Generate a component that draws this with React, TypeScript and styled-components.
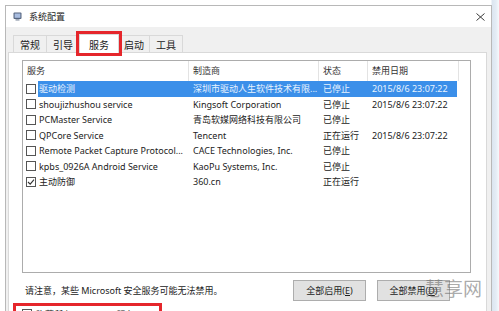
import React from 'react';
import styled, { createGlobalStyle } from 'styled-components';

const GlobalStyle = createGlobalStyle`
  body {
    margin: 0;
    background: #fff;
    font-family: "Noto Sans", "Noto Sans CJK SC", sans-serif;
  }
  * { box-sizing: border-box; }
`;

interface IService {
  name: string;
  maker: string;
  status: string;
  date: string;
  checked?: boolean;
  selected?: boolean;
}

const services: IService[] = [
  { name: '驱动检测', maker: '深圳市驱动人生软件技术有限...', status: '已停止', date: '2015/8/6 23:07:22', selected: true },
  { name: 'shoujizhushou service', maker: 'Kingsoft Corporation', status: '已停止', date: '2015/8/6 23:07:22' },
  { name: 'PCMaster Service', maker: '青岛软媒网络科技有限公司', status: '已停止', date: '' },
  { name: 'QPCore Service', maker: 'Tencent', status: '正在运行', date: '2015/8/6 23:07:22' },
  { name: 'Remote Packet Capture Protocol...', maker: 'CACE Technologies, Inc.', status: '已停止', date: '' },
  { name: 'kpbs_0926A Android Service', maker: 'KaoPu Systems, Inc.', status: '已停止', date: '' },
  { name: '主动防御', maker: '360.cn', status: '正在运行', date: '', checked: true },
];

const tabs = ['常规', '引导', '服务', '启动', '工具'];
const tabWidths = [34, 34, 40, 32, 34];

const App: React.FC = () => {
  return (
    <Page>
      <GlobalStyle />
      <Window>
        <TitleBar>
          <svg width="9" height="9" viewBox="0 0 9 9">
            <rect x="0.5" y="0.5" width="8" height="6.5" rx="1" fill="#56657f" />
            <rect x="1.6" y="1.5" width="5.8" height="4.3" fill="#a9bde0" />
            <rect x="2.5" y="7.3" width="4" height="1.2" fill="#7a869a" />
          </svg>
          <Title>系统配置</Title>
          <CloseButton>
            <svg width="9" height="8" viewBox="0 0 9 8">
              <path d="M0.5 0.5 L8.5 7.5 M8.5 0.5 L0.5 7.5" stroke="#3a3a3a" strokeWidth="1" />
            </svg>
          </CloseButton>
        </TitleBar>

        <TabStrip>
          {tabs.map((t, i) => (
            <Tab key={t} $active={t === '服务'} style={{ width: tabWidths[i] }}>
              {t}
            </Tab>
          ))}
        </TabStrip>

        <Panel>
          <ListBox>
            <HeaderRow>
              <HeaderCell>服务</HeaderCell>
              <HeaderCell>制造商</HeaderCell>
              <HeaderCell>状态</HeaderCell>
              <HeaderCell>禁用日期</HeaderCell>
            </HeaderRow>
            {services.map((s) => (
              <Row key={s.name}>
                <CheckCell>
                  <CheckBox>
                    {s.checked && (
                      <svg width="8" height="8" viewBox="0 0 8 8">
                        <path d="M1 4 L3.2 6.2 L7 1.6" stroke="#333" strokeWidth="1.1" fill="none" />
                      </svg>
                    )}
                  </CheckBox>
                </CheckCell>
                <RowBody $selected={s.selected}>
                  <Cell $first>{s.name}</Cell>
                  <Cell>{s.maker}</Cell>
                  <Cell>{s.status}</Cell>
                  <Cell>{s.date}</Cell>
                </RowBody>
              </Row>
            ))}
          </ListBox>

          <NoteRow>
            <Note>请注意，某些 Microsoft 安全服务可能无法禁用。</Note>
            <Buttons>
              <Button>全部启用(<u>E</u>)</Button>
              <Button>全部禁用(<u>D</u>)</Button>
            </Buttons>
          </NoteRow>

          <HideRow>
            <CheckBox />
            <span>隐藏所有 Microsoft 服务(<u>H</u>)</span>
          </HideRow>
        </Panel>
      </Window>
      <Watermark>慧享网</Watermark>
    </Page>
  );
};

const Page = styled.div`
  position: relative;
  width: 499px;
  height: 311px;
  overflow: hidden;
  padding: 5px 0 0 5px;
  background: linear-gradient(
    to right,
    #ffffff 491px,
    #dbe5f0 492px,
    #e4ecf5 496px,
    #f6f9fc 499px
  );
`;

const Window = styled.div`
  width: 487px;
  height: 320px;
  border: 1px solid #b8b8b8;
  background: #f0f0f0;
  display: flex;
  flex-direction: column;
`;

const TitleBar = styled.div`
  height: 21px;
  background: #fff;
  display: flex;
  align-items: center;
  padding: 0 6px 0 7px;
  flex-shrink: 0;
`;

const Title = styled.span`
  margin-left: 7px;
  font-size: 9px;
  color: #222;
  font-family: "Noto Sans CJK SC", sans-serif;
`;

const CloseButton = styled.div`
  margin-left: auto;
  display: flex;
  align-items: center;
`;

const TabStrip = styled.div`
  height: 26px;
  display: flex;
  align-items: flex-end;
  padding: 0 0 0 7px;
  margin-bottom: -1px;
  flex-shrink: 0;
`;

const Tab = styled.div<{ $active?: boolean }>`
  position: relative;
  height: ${(p) => (p.$active ? '19px' : '18px')};
  margin-right: -1px;
  border: 1px solid #d9d9d9;
  border-bottom: ${(p) => (p.$active ? 'none' : '1px solid #d9d9d9')};
  background: ${(p) => (p.$active ? '#fff' : '#f0f0f0')};
  z-index: ${(p) => (p.$active ? 2 : 1)};
  outline: ${(p) => (p.$active ? '3px solid #e5262b' : 'none')};
  font-family: "Noto Sans CJK SC", sans-serif;
  font-size: 10px;
  color: #222;
  display: flex;
  align-items: center;
  justify-content: center;
`;

const Panel = styled.div`
  margin-left: 2px;
  width: 479px;
  flex: 1;
  background: #fff;
  border: 1px solid #d9d9d9;
  padding: 7px 0 0 13px;
`;

const ListBox = styled.div`
  width: 449px;
  height: 213px;
  border: 1px solid #acacac;
`;

const HeaderRow = styled.div`
  display: grid;
  grid-template-columns: 166px 130px 49px 91px;
  height: 20px;
`;

const HeaderCell = styled.div`
  border-right: 1px solid #e3e3e3;
  padding-left: 4px;
  line-height: 20px;
  font-size: 9px;
  color: #333;
  font-family: "Noto Sans CJK SC", sans-serif;
`;

const Row = styled.div`
  display: flex;
  height: 15.5px;
`;

const CheckCell = styled.div`
  width: 15px;
  display: flex;
  align-items: center;
  padding-left: 3px;
`;

const CheckBox = styled.div`
  width: 10px;
  height: 10px;
  border: 1px solid #555;
  background: #fff;
  display: flex;
  align-items: center;
  justify-content: center;
  flex-shrink: 0;
`;

const RowBody = styled.div<{ $selected?: boolean }>`
  display: grid;
  grid-template-columns: 151px 130px 49px 89px;
  background: ${(p) => (p.$selected ? '#3b8fe9' : 'transparent')};
  color: ${(p) => (p.$selected ? '#e8f3ff' : '#222')};
`;

const Cell = styled.div<{ $first?: boolean }>`
  padding-left: ${(p) => (p.$first ? '1px' : '4px')};
  font-size: 9px;
  line-height: 15.5px;
  white-space: nowrap;
  overflow: hidden;
`;

const NoteRow = styled.div`
  width: 449px;
  height: 21px;
  margin-top: 7px;
  display: flex;
  align-items: center;
`;

const Note = styled.span`
  margin-left: 3px;
  font-size: 9px;
  color: #222;
  white-space: nowrap;
`;

const Buttons = styled.div`
  margin-left: auto;
  margin-right: 21px;
  display: flex;
  gap: 11px;
`;

const Button = styled.div`
  width: 73px;
  height: 21px;
  background: #e1e1e1;
  border: 1px solid #adadad;
  font-size: 9px;
  color: #222;
  display: flex;
  align-items: center;
  justify-content: center;
  u { text-decoration: underline; }
`;

const HideRow = styled.div`
  margin: 2px 0 0 -9px;
  width: 149px;
  height: 22px;
  border: 3px solid #e5262b;
  display: flex;
  align-items: center;
  gap: 4px;
  padding-left: 6px;
  font-size: 9px;
  color: #222;
  white-space: nowrap;
`;

const Watermark = styled.div`
  position: absolute;
  left: 425px;
  top: 274px;
  font-size: 19px;
  font-family: "Noto Sans CJK SC", sans-serif;
  color: rgba(100, 100, 100, 0.55);
  letter-spacing: 0px;
`;

export default App;
